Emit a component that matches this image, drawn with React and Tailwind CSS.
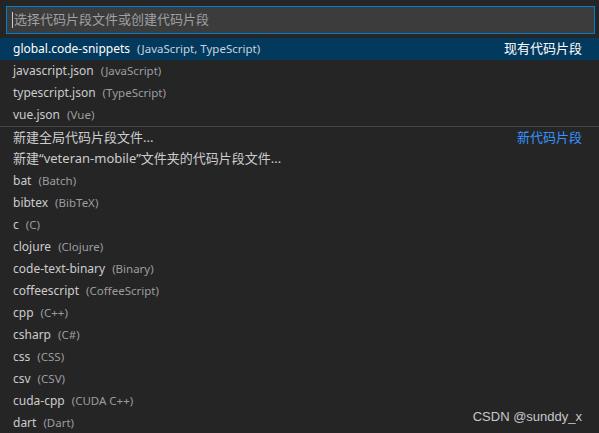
const existing = [
  { label: 'global.code-snippets', desc: 'JavaScript, TypeScript', tag: '现有代码片段', active: true },
  { label: 'javascript.json', desc: 'JavaScript' },
  { label: 'typescript.json', desc: 'TypeScript' },
  { label: 'vue.json', desc: 'Vue' },
]

const created = [
  { label: '新建全局代码片段文件...', tag: '新代码片段', sep: true, cjk: true },
  { label: '新建“veteran-mobile”文件夹的代码片段文件...', cjk: true },
  { label: 'bat', desc: 'Batch' },
  { label: 'bibtex', desc: 'BibTeX' },
  { label: 'c', desc: 'C' },
  { label: 'clojure', desc: 'Clojure' },
  { label: 'code-text-binary', desc: 'Binary' },
  { label: 'coffeescript', desc: 'CoffeeScript' },
  { label: 'cpp', desc: 'C++' },
  { label: 'csharp', desc: 'C#' },
  { label: 'css', desc: 'CSS' },
  { label: 'csv', desc: 'CSV' },
  { label: 'cuda-cpp', desc: 'CUDA C++' },
  { label: 'dart', desc: 'Dart' },
]

function Row({ item }) {
  return (
    <div
      className={
        'flex items-center h-[22px] pl-[13px] pr-[17px] ' +
        (item.active ? 'bg-[#04395e] text-white ' : 'text-[#cccccc] ') +
        (item.sep ? 'border-t border-[#454545]' : '')
      }
    >
      <span className={'whitespace-nowrap ' + (item.cjk ? 'text-[13px]' : 'text-[12px]')}>{item.label}</span>
      {item.desc && (
        <span className={'ml-[7px] text-[11.5px] whitespace-nowrap ' + (item.active ? 'text-[#c5d3df]' : 'text-[#9d9d9d]')}>
          ({item.desc})
        </span>
      )}
      {item.tag && (
        <span className={'ml-auto text-[13px] ' + (item.active ? 'text-white' : 'text-[#3794ff]')}>{item.tag}</span>
      )}
    </div>
  )
}

export default function App() {
  return (
    <div
      className="relative w-[599px] h-[433px] overflow-hidden bg-[#252526]"
      style={{ fontFamily: '"Noto Sans", "Noto Sans CJK SC", sans-serif' }}
    >
      {/* Input */}
      <div className="pt-[6px] pl-[6px] pr-[4px] pb-[4px]">
        <div className="flex items-center h-[28px] bg-[#3c3c3c] border border-[#007fd4] pl-[5px]">
          <span className="w-px h-[16px] bg-[#cccccc]" />
          <span className="ml-px text-[13px] text-[#a0a0a0]">选择代码片段文件或创建代码片段</span>
        </div>
      </div>

      {/* List */}
      <div>
        {existing.map((item) => (
          <Row key={item.label} item={item} />
        ))}
        {created.map((item) => (
          <Row key={item.label} item={item} />
        ))}
      </div>

      {/* Watermark */}
      <div
        className="absolute right-[17px] top-[407px] text-[13px] text-[#c8c8c8]"
        style={{ fontFamily: '"Liberation Sans", Arial, sans-serif' }}
      >
        CSDN @sunddy_x
      </div>
    </div>
  )
}
